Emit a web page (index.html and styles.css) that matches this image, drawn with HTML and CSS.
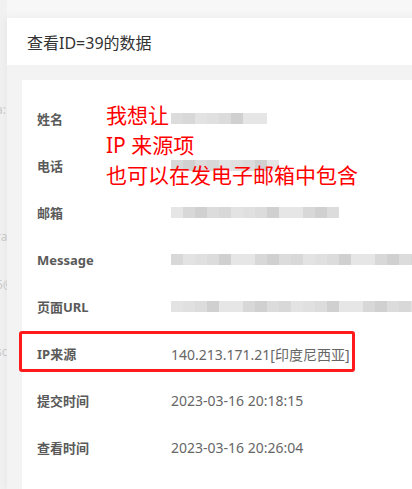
FILE: index.html
```html
<!DOCTYPE html>
<html>
    <head>
        <meta charset="utf-8">
        <link rel="stylesheet" href="styles.css">
    </head>
    <body>
        <aside class="behind">
            <span class="r1">a:</span>
            <span class="r2">ra</span>
            <span class="r3">5@</span>
            <span class="r4">sc</span>
        </aside>
        <section class="modal">
            <header class="modal-head">查看ID=39的数据</header>
            <div class="modal-body">
                <div class="card">
                    <div class="row">
                        <span class="label">姓名</span>
                        <span class="blur" id="b-name"></span>
                    </div>
                    <div class="row">
                        <span class="label">电话</span>
                        <span class="blur" id="b-phone"></span>
                    </div>
                    <div class="row">
                        <span class="label">邮箱</span>
                        <span class="blur" id="b-mail"></span>
                    </div>
                    <div class="row">
                        <span class="label">Message</span>
                        <span class="blur" id="b-msg"></span>
                    </div>
                    <div class="row">
                        <span class="label">页面URL</span>
                        <span class="blur" id="b-url"></span>
                    </div>
                    <div class="row marked">
                        <span class="label">IP来源</span>
                        <span class="value">140.213.171.21[印度尼西亚]</span>
                    </div>
                    <div class="row">
                        <span class="label">提交时间</span>
                        <span class="value">2023-03-16 20:18:15</span>
                    </div>
                    <div class="row">
                        <span class="label">查看时间</span>
                        <span class="value">2023-03-16 20:26:04</span>
                    </div>

                    <p class="note">我想让<br>IP 来源项<br>也可以在发电子邮箱中包含</p>
                </div>
            </div>
        </section>
        <script>
            // pixelated placeholders for the hidden values
            let shades = ["#d8d8d8", "#e0e0e0", "#e6e6e6", "#d0d0d0", "#dcdcdc", "#e3e3e3"];
            let bars = {"b-name": 8, "b-phone": 9, "b-mail": 14, "b-msg": 21, "b-url": 21};
            let seed = 3;
            for (let id in bars) {
                let bar = document.getElementById(id);
                for (let i = 0; i < bars[id]; i++) {
                    let cell = document.createElement("i");
                    seed = (seed * 7 + 5) % 11;
                    cell.style.background = shades[seed % shades.length];
                    bar.appendChild(cell);
                }
            }
        </script>
    </body>
</html>
```

FILE: styles.css
```css
html, body {
    margin: 0;
    padding: 0;
    height: 100%;
    overflow: hidden;
}
body {
    display: flex;
    background-color: #f7f7f7;
    font-family: "Noto Sans", "Noto Sans CJK SC", sans-serif;
}
.behind {
    width: 7px;
    flex: none;
    padding-top: 65px;
    background-color: #f1f1f1;
    overflow: hidden;
    display: flex;
    flex-direction: column;
}
.behind span {
    display: block;
    height: 16px;
    line-height: 16px;
    color: #cccccc;
    font-size: 12px;
    margin-left: -4px;
}
.r1 { margin-top: 37px; }
.r2 { margin-top: 111px; }
.r3 { margin-top: 32px; }
.r4 { margin-top: 51px; }
.modal {
    flex: 1;
    margin-top: 18px;
    margin-right: -40px;
    background-color: #f3f3f3;
    box-shadow: 0 0 10px rgba(0, 0, 0, 0.06);
    display: flex;
    flex-direction: column;
}
.modal-head {
    height: 47px;
    background-color: white;
    padding-left: 20px;
    display: flex;
    align-items: center;
    font-size: 16px;
    color: #333;
}
.modal-body {
    flex: 1;
    padding: 15px 0 0 15px;
}
.card {
    position: relative;
    background-color: white;
    height: 100%;
    padding-top: 15px;
}
.row {
    position: relative;
    height: 47px;
    display: flex;
    align-items: center;
    padding-left: 15px;
}
.label {
    width: 134px;
    flex: none;
    font-size: 13px;
    font-weight: bold;
    color: #5a5a5a;
}
.value {
    font-size: 14px;
    color: #666;
}
.blur {
    display: flex;
    height: 11px;
}
.blur i {
    width: 12px;
    height: 11px;
}
.marked::after {
    content: "";
    position: absolute;
    left: -3px;
    top: 1px;
    width: 330px;
    height: 35px;
    border: 3px solid #ff1b1b;
    border-radius: 3px;
}
.note {
    position: absolute;
    left: 84px;
    top: 20px;
    margin: 0;
    font-size: 21px;
    line-height: 30px;
    color: #ff0000;
}
```
